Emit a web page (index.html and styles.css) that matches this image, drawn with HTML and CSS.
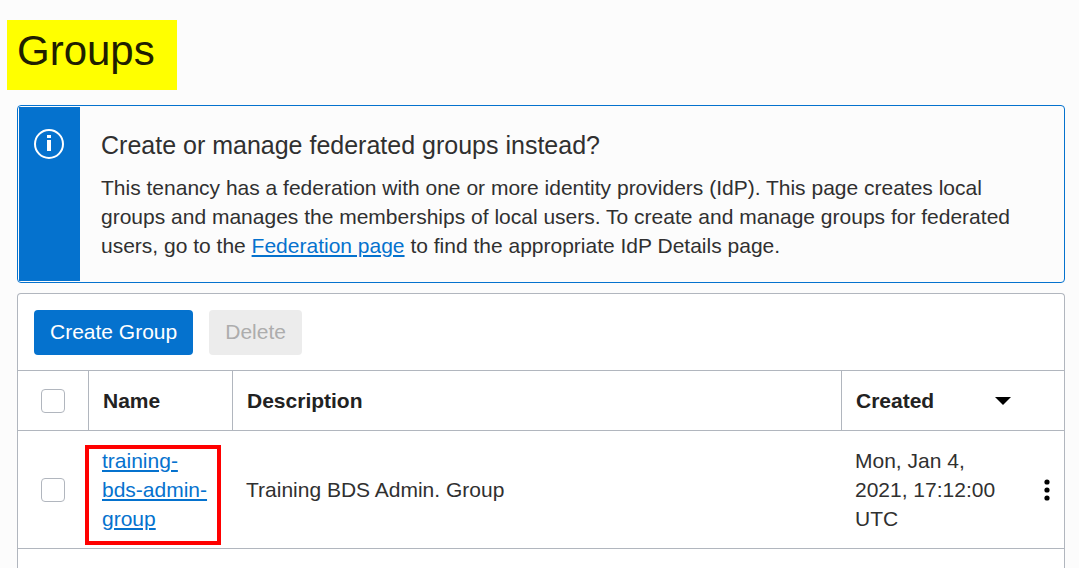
FILE: index.html
```html
<!DOCTYPE html>
<html lang="en">
<head>
<meta charset="utf-8">
<title>Groups</title>
<link rel="stylesheet" href="styles.css">
</head>
<body>
<main class="page">
  <h1 class="page-title">Groups</h1>
  <section class="notice">
    <div class="notice-side">
      <svg class="info-icon" viewBox="0 0 30 30" aria-hidden="true">
        <circle cx="15" cy="15" r="14" fill="none" stroke="#fff" stroke-width="2"/>
        <path d="M13 6h4v3h-4zM13 11h4v11h-4z" fill="#fff"/>
      </svg>
    </div>
    <div class="notice-body">
      <h2 class="notice-title">Create or manage federated groups instead?</h2>
      <p class="notice-text">This tenancy has a federation with one or more identity providers (IdP). This page creates local groups and manages the memberships of local users. To create and manage groups for federated users, go to the <a class="link" href="#federation">Federation page</a> to find the appropriate IdP Details page.</p>
    </div>
  </section>
  <section class="card">
    <div class="toolbar">
      <button class="button button-primary" type="button">Create Group</button>
      <button class="button" type="button" disabled>Delete</button>
    </div>
    <table class="groups">
      <colgroup>
        <col class="col-check"><col class="col-name"><col><col class="col-created"><col class="col-menu">
      </colgroup>
      <thead>
        <tr>
          <th class="check-cell"><input class="check" type="checkbox" aria-label="Select all groups"></th>
          <th>Name</th>
          <th>Description</th>
          <th colspan="2" aria-sort="descending">
            <button class="sort" type="button">Created
              <svg class="sort-icon" viewBox="0 0 16 8" aria-hidden="true"><path d="M0 0h16L8 8z" fill="#000"/></svg>
            </button>
          </th>
        </tr>
      </thead>
      <tbody>
        <tr>
          <td class="check-cell"><input class="check" type="checkbox" aria-label="Select training-bds-admin-group"></td>
          <td class="name-cell"><a class="link" href="#group">training-bds-admin-group</a><span class="highlight"></span></td>
          <td>Training BDS Admin. Group</td>
          <td>Mon, Jan 4, 2021, 17:12:00 UTC</td>
          <td class="menu-cell">
            <button class="menu" type="button" aria-label="Actions">
              <svg class="menu-icon" viewBox="0 0 6 22" aria-hidden="true"><circle cx="3" cy="3" r="2.6"/><circle cx="3" cy="11" r="2.6"/><circle cx="3" cy="19" r="2.6"/></svg>
            </button>
          </td>
        </tr>
      </tbody>
    </table>
  </section>
</main>
</body>
</html>
```
FILE: styles.css
```css
* { box-sizing: border-box; }
body {
  margin: 0;
  background: #fcfcfc;
  color: #303030;
  font: 21px/29px "Liberation Sans", Arial, sans-serif;
}
.page {
  display: flex;
  flex-direction: column;
  min-height: 100vh;
  padding: 20px 14px 0 17px;
}
.page-title {
  align-self: flex-start;
  margin: 0 0 15px -10px;
  padding: 6px 22px 14px 10px;
  background: #ffff00;
  color: #201e00;
  font-size: 42px;
  font-weight: 400;
  line-height: 50px;
}
.notice {
  display: flex;
  margin-bottom: 10px;
  padding: 1px;
  border: 1px solid #0572ce;
  border-radius: 4px;
}
.notice-side {
  flex: none;
  width: 61px;
  padding: 22px 15px;
  background: #0572ce;
}
.info-icon { display: block; width: 30px; height: 30px; }
.notice-body { padding: 22px 21px 21px; }
.notice-title {
  margin: 0 0 12px;
  font-size: 25px;
  font-weight: 400;
  line-height: 32px;
}
.notice-text { margin: 0; }
.link {
  color: #0572ce;
  text-decoration: underline;
  text-decoration-thickness: 2px;
  text-underline-offset: 2px;
}
.card {
  flex: 1;
  border: 1px solid #b1b6be;
  border-bottom: 0;
  border-radius: 4px 4px 0 0;
  background: #fff;
}
.toolbar { display: flex; gap: 16px; padding: 16px 16px 15px; }
.button {
  height: 45px;
  padding: 0 16px 2px;
  border: 0;
  border-radius: 4px;
  background: #ececec;
  color: #adadad;
  font: inherit;
}
.button-primary { background: #0572ce; color: #fff; }
.groups {
  width: 100%;
  border-collapse: separate;
  border-spacing: 0;
  border-top: 1px solid #b1b6be;
  table-layout: fixed;
}
.col-check { width: 71px; }
.col-name { width: 144px; }
.col-created { width: 170px; }
.col-menu { width: 52px; }
.groups th {
  height: 60px;
  padding: 0 15px 0 14px;
  border-right: 1px solid #b1b6be;
  border-bottom: 1px solid #b1b6be;
  color: #222;
  text-align: left;
}
.groups th:last-child { border-right: 0; }
.groups td {
  padding: 15px 14px 15px 13px;
  border-bottom: 1px solid #b1b6be;
}
.groups .name-cell { position: relative; padding-right: 20px; }
.groups .check-cell { padding: 0 0 0 23px; }
.check {
  display: block;
  width: 24px;
  height: 24px;
  margin: 0;
  border: 1px solid #b1b6be;
  border-radius: 4px;
  background: #fff;
  appearance: none;
}
.sort {
  display: flex;
  align-items: center;
  justify-content: space-between;
  width: 100%;
  padding: 0 38px 0 0;
  border: 0;
  background: none;
  color: inherit;
  font: inherit;
}
.sort-icon { width: 16px; height: 8px; }
.highlight {
  position: absolute;
  inset: 14px 12px 3px -4px;
  border: 4px solid #ff0000;
  pointer-events: none;
}
.groups .menu-cell { padding: 0 14px 0 0; }
.menu {
  display: block;
  margin-left: auto;
  padding: 0;
  border: 0;
  background: none;
}
.menu-icon { display: block; width: 6px; height: 22px; }
```
